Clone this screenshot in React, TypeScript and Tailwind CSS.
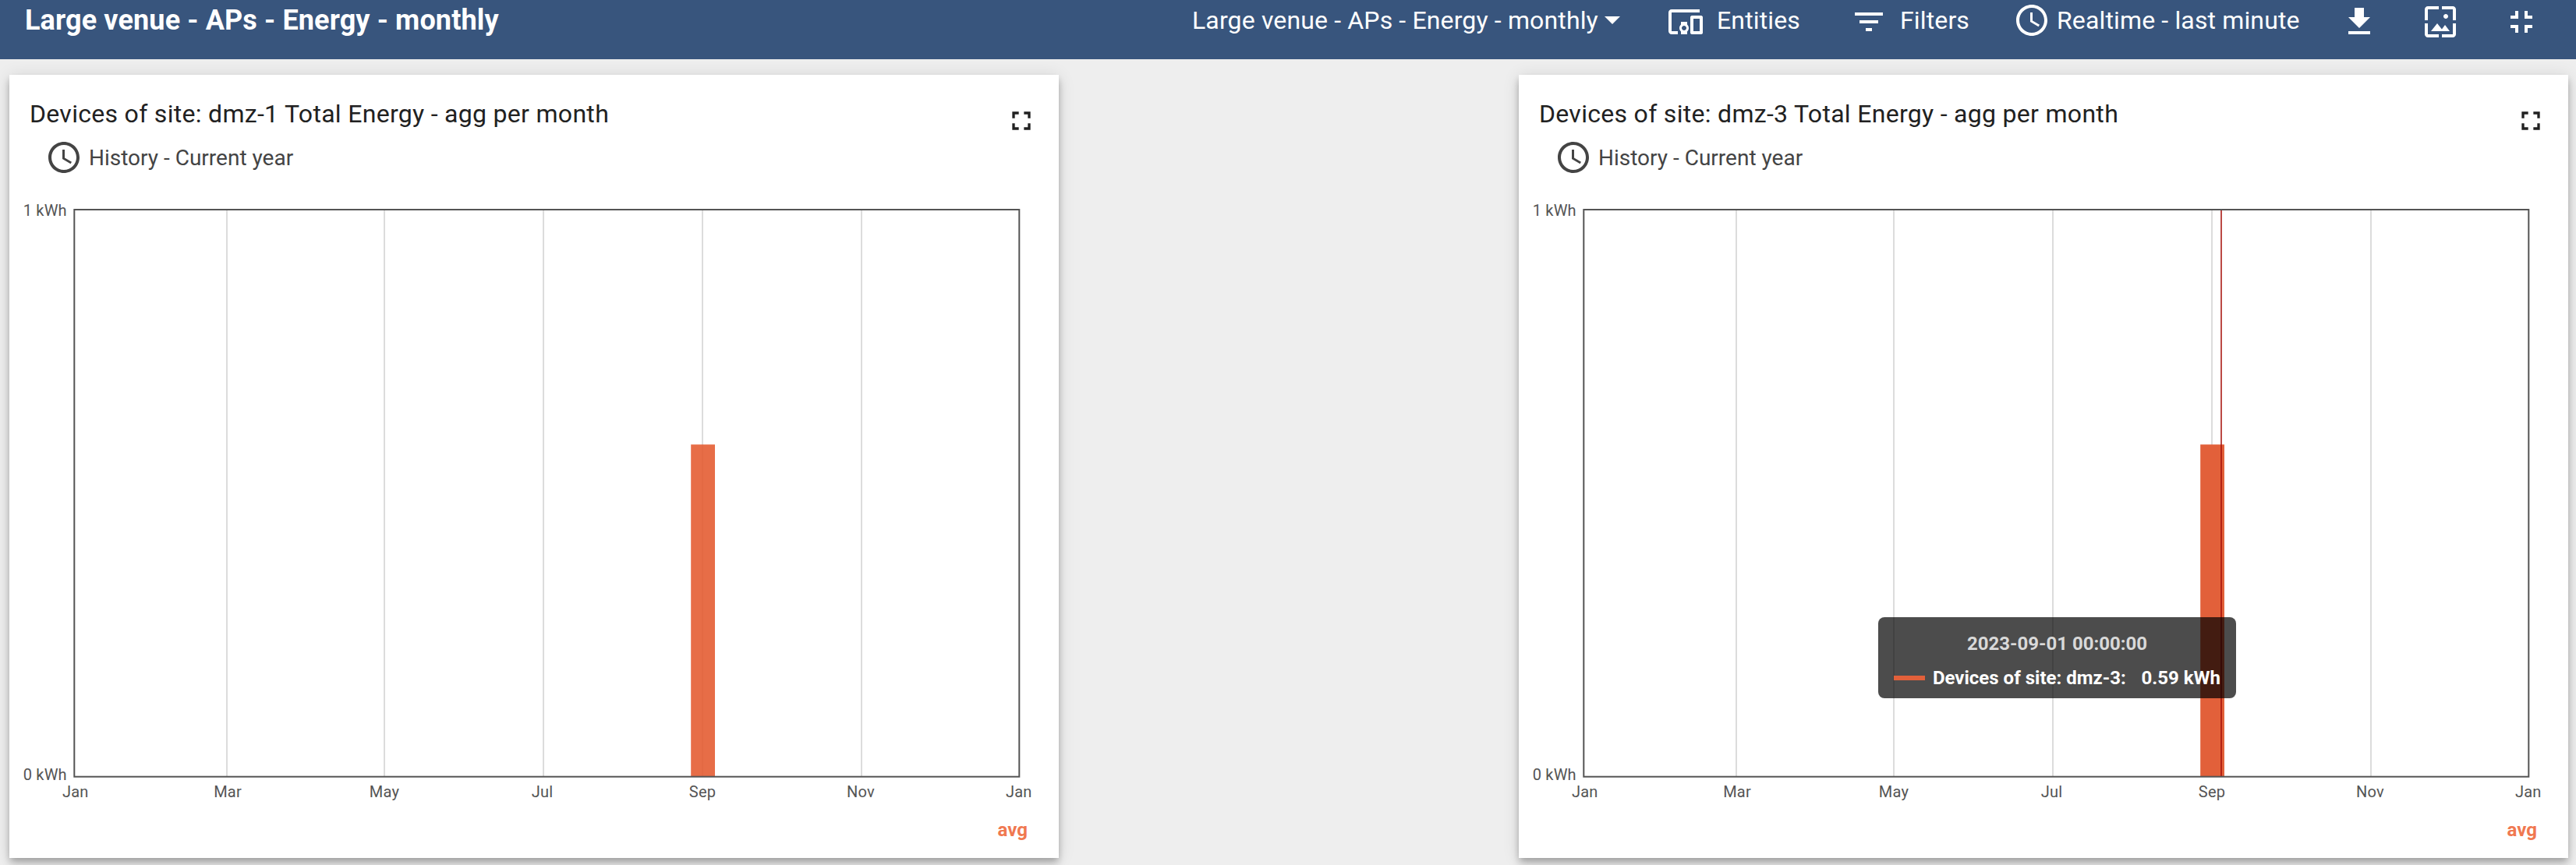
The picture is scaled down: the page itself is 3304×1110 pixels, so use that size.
import { MdArrowDropDown, MdDevicesOther, MdFileDownload, MdFilterList, MdFullscreen, MdFullscreenExit, MdSchedule, MdWallpaper } from "react-icons/md";

const months = [
  { name: "Jan", x: 84.7 },
  { name: "Mar", x: 280 },
  { name: "May", x: 481 },
  { name: "Jul", x: 683.5 },
  { name: "Sep", x: 889 },
  { name: "Nov", x: 1092 },
  { name: "Jan", x: 1294.7 },
];
const gridLines = [278, 480, 684, 888, 1092];

function Toolbar() {
  return (
    <header className="flex h-[76px] items-start bg-[#38557d] text-white">
      <h1 className="ml-8 mt-1 w-[1497px] shrink-0 whitespace-nowrap text-[36px] font-bold leading-[44px] tracking-[0.13px]">Large venue - APs - Energy - monthly</h1>
      <div className="flex h-14 items-center whitespace-nowrap text-[32px] tracking-[0.14px] [&>*]:shrink-0">
        <span className="mb-1 w-[515px]">Large venue - APs - Energy - monthly</span>
        <MdArrowDropDown className="-mt-1.5 size-12" />
        <MdDevicesOther className="ml-[46px] size-12" />
        <span className="mb-1 ml-4 w-[171px]">Entities</span>
        <MdFilterList className="size-12" />
        <span className="mb-1 ml-4 w-[145px]">Filters</span>
        <MdSchedule className="-mt-1 size-12" />
        <span className="mb-1 ml-2 w-[364px]">Realtime - last minute</span>
        <MdFileDownload className="size-12" />
        <MdWallpaper className="ml-14 size-12" />
        <MdFullscreenExit className="ml-14 size-12" />
      </div>
    </header>
  );
}

function Tooltip() {
  return (
    <div className="absolute left-[461px] top-[696px] flex h-[104px] w-[459px] flex-col rounded-lg bg-black/70 px-5 pt-4 text-[24px] font-bold text-white">
      <div className="h-9 text-center leading-9 text-[#d9d9d9]">2023-09-01 00:00:00</div>
      <div className="mt-2 flex h-9 items-center whitespace-nowrap">
        <span className="h-1.5 w-10 bg-[#e2603a]" />
        <span className="ml-2.5 w-[268px]">Devices of site: dmz-3:</span>
        <span>0.59 kWh</span>
      </div>
    </div>
  );
}

function EnergyCard({ site, active = false }: { site: string; active?: boolean }) {
  return (
    <section className="relative flex h-[1005px] w-[1346px] flex-col bg-white shadow-[0_4px_8px_-2px_rgba(0,0,0,0.2),0_8px_10px_0_rgba(0,0,0,0.14),0_2px_20px_0_rgba(0,0,0,0.12)]">
      <div className="flex justify-between pl-[26px] pr-7 pt-7">
        <h2 className="whitespace-nowrap text-[32px] leading-[44px] tracking-[0.3px] text-[#212121]">Devices of site: {site} Total Energy - agg per month</h2>
        <MdFullscreen className="mt-[11px] size-10 text-[#212121]" />
      </div>
      <div className="ml-[46px] mt-[3px] flex h-12 items-center text-[28px] text-[#444]">
        <MdSchedule className="size-12" />
        <span className="ml-2 mt-0.5 whitespace-nowrap">History - Current year</span>
      </div>
      <svg className="absolute left-0 top-0 h-[1005px] w-[1346px]" viewBox="0 0 1346 1005" fill="none">
        {gridLines.map((x) => (
          <rect key={x} x={x} y="174" width="2" height="726" fill="#dcdcdc" />
        ))}
        <rect x="874.2" y="474.4" width="30.8" height="425.6" fill={active ? "#e2603a" : "#e4592e"} fillOpacity={active ? 1 : 0.88} />
        {active && <rect x="900" y="174" width="2" height="726" fill="#a61009" fillOpacity="0.76" />}
        <rect x="83.3" y="173" width="1212" height="727.7" stroke="#545454" strokeWidth="2" />
        <g fill="#545454" fontSize="20" className="font-[Roboto] tracking-[0.2px]">
          <text x="73.8" y="181" textAnchor="end">1 kWh</text>
          <text x="73.8" y="905" textAnchor="end">0 kWh</text>
          {months.map((m) => (
            <text key={m.x} x={m.x} y="927" textAnchor="middle">{m.name}</text>
          ))}
        </g>
      </svg>
      <div className="mt-auto pb-5 pr-10 text-right text-[24px] font-bold leading-8 text-[#f07850]">avg</div>
      {active && <Tooltip />}
    </section>
  );
}

export default function App() {
  return (
    <div className="h-[1110px] w-[3304px] overflow-hidden bg-[#eeeeee] font-[Roboto,sans-serif]">
      <Toolbar />
      <main className="flex justify-between pl-3 pr-2.5 pt-5">
        <EnergyCard site="dmz-1" />
        <EnergyCard site="dmz-3" active />
      </main>
    </div>
  );
}
